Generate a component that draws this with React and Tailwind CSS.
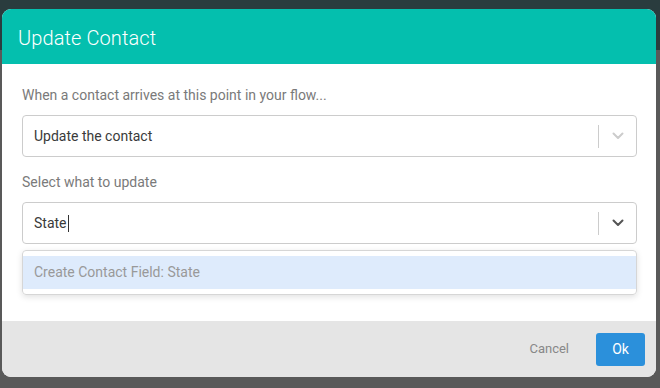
import React from "react";

function Chevron({ color }) {
  return (
    <svg width="12" height="8" viewBox="0 0 12 8" fill="none">
      <path d="M1.5 1.5 L6 6 L10.5 1.5" stroke={color} strokeWidth="2" strokeLinecap="round" strokeLinejoin="round" />
    </svg>
  );
}

export default function App() {
  return (
    <div className="relative w-[660px] h-[388px] overflow-hidden bg-[#595959]" style={{ fontFamily: "Roboto, 'Liberation Sans', sans-serif" }}>
      <div className="h-[50px] bg-[#2a3c3e]" />
      <div className="absolute left-[2px] top-[9px] w-[654px] h-[368px] rounded-[9px] overflow-hidden flex flex-col bg-white">
        <div className="h-[55px] bg-[#04bfae] flex items-center pl-4 pt-[2px]">
          <span className="text-white text-[20px] font-light tracking-[0.1px]">Update Contact</span>
        </div>
        <div className="flex-1 pl-5 pr-[19px] pt-[21px]">
          <div className="text-[14px] text-[#7a7a7a] leading-[20px]">When a contact arrives at this point in your flow...</div>
          <div className="mt-[10px] h-[42px] border border-[#cccccc] rounded-[4px] flex items-center">
            <span className="flex-1 pl-[11px] text-[14px] text-[#3a3a3a]">Update the contact</span>
            <div className="w-px h-[23px] bg-[#cccccc]" />
            <div className="w-[37px] flex justify-center"><Chevron color="#cccccc" /></div>
          </div>
          <div className="mt-[15px] text-[14px] text-[#7a7a7a] leading-[20px]">Select what to update</div>
          <div className="mt-[10px] h-[42px] border border-[#cccccc] rounded-[4px] flex items-center">
            <span className="flex-1 pl-[11px] text-[14px] text-[#3a3a3a] flex items-center">State<span className="inline-block w-px h-[17px] bg-[#333] ml-[1px]" /></span>
            <div className="w-px h-[23px] bg-[#cccccc]" />
            <div className="w-[37px] flex justify-center"><Chevron color="#555555" /></div>
          </div>
          <div className="mt-[6px] border border-[#d6d6d6] rounded-[4px] py-[5px] shadow-[0_2px_6px_rgba(0,0,0,0.12)]">
            <div className="h-[33px] bg-[#deebfc] flex items-center pl-[11px] text-[14px] text-[#999]">Create Contact Field: State</div>
          </div>
        </div>
        <div className="h-[56px] bg-[#e5e5e5] flex items-center justify-end pr-[11px]">
          <span className="text-[13px] text-[#888] mr-[27px]">Cancel</span>
          <button className="w-[49px] h-[33px] rounded-[3px] bg-[#2b90db] text-white text-[14px]">Ok</button>
        </div>
      </div>
    </div>
  );
}
